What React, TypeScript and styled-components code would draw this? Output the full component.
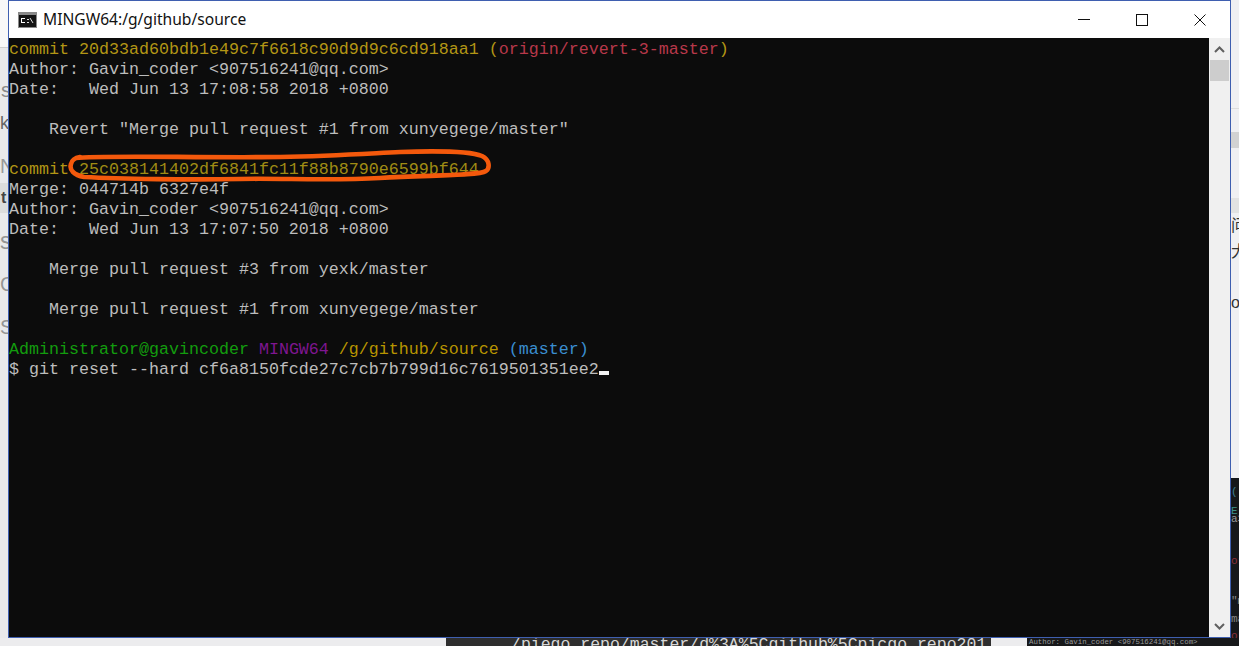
import React from "react";
import styled, { createGlobalStyle } from "styled-components";

const Global = createGlobalStyle`
  html, body { margin: 0; padding: 0; width: 1239px; height: 646px; overflow: hidden; background: #eeeeef; }
  #root { width: 1239px; height: 646px; }
`;

const Desktop = styled.div`
  width: 1239px;
  height: 646px;
  overflow: hidden;
  display: grid;
  grid-template-columns: 8px 1223px 8px;
  grid-template-rows: 638px 8px;
  background: #ececee;
`;

const Strip = styled.div<{ $bg: string }>`
  display: flex;
  flex-direction: column;
  min-height: 0;
  overflow: hidden;
  background: ${(p) => p.$bg};
`;

const StripHead = styled.div<{ $h: number }>`
  flex: none;
  height: ${(p) => p.$h}px;
  background: #f8f8f8;
  border-bottom: 1px solid #cfcfcf;
`;

const Scrap = styled.div<{ $h: number; $gap: number; $bg?: string; $color?: string; $size?: number; $weight?: number; $indent?: number; $cjk?: boolean }>`
  flex: none;
  height: ${(p) => p.$h}px;
  margin-top: ${(p) => p.$gap}px;
  padding-left: ${(p) => p.$indent ?? 0}px;
  overflow: hidden;
  background: ${(p) => p.$bg ?? "transparent"};
  color: ${(p) => p.$color ?? "#8a8a8a"};
  font: ${(p) => p.$weight ?? 400} ${(p) => p.$size ?? 20}px/${(p) => p.$h}px ${(p) => (p.$cjk ? '"Noto Sans CJK SC"' : '"Liberation Sans"')}, sans-serif;
  white-space: nowrap;
`;

const RightTerm = styled.div`
  margin-top: auto;
  height: 160px;
  flex: none;
  background: #15171a;
  display: flex;
  flex-direction: column;
  font: 11px/8px "Liberation Mono", monospace;
  overflow: hidden;
`;

const TermBit = styled.div<{ $gap: number; $c: string }>`
  flex: none;
  height: 8px;
  margin-top: ${(p) => p.$gap}px;
  color: ${(p) => p.$c};
`;

const BottomStrip = styled.div`
  grid-column: 1 / 4;
  display: flex;
  overflow: hidden;
  background: #ececee;
`;

const BottomCode = styled.div`
  margin-left: 446px;
  width: 545px;
  flex: none;
  box-sizing: border-box;
  background: #2e2e2e;
  color: #d8d8d8;
  padding-left: 65px;
  font: 16.5px/13px "Liberation Mono", monospace;
  text-decoration: underline;
  white-space: nowrap;
  overflow: hidden;
`;

const TinyTerm = styled.div`
  margin-left: 36px;
  flex: 1;
  background: #17181a;
  color: #9a9a9a;
  overflow: hidden;
  padding-left: 2px;
  font: 7.4px/8px "Liberation Mono", monospace;
  white-space: nowrap;
`;

const Window = styled.div`
  box-sizing: border-box;
  min-height: 0;
  display: flex;
  flex-direction: column;
  background: #fff;
  border: 1px solid #3f5fb0;
`;

const TitleBar = styled.div`
  height: 37px;
  flex: none;
  display: flex;
  align-items: center;
  background: #fff;
  padding-left: 9px;
  padding-right: 1px;
`;

const AppIcon = styled.svg`
  width: 19px;
  height: 16px;
  flex: none;
`;

const Title = styled.span`
  margin-left: 6px;
  margin-bottom: 2px;
  font: 15.6px "Noto Sans", "Liberation Sans", sans-serif;
  color: #111;
`;

const Controls = styled.div`
  margin-left: auto;
  display: flex;
  height: 100%;
`;

const Control = styled.div`
  width: 58px;
  height: 100%;
  display: flex;
  align-items: center;
  justify-content: center;
  & svg { width: 14px; height: 14px; display: block; }
`;

const Body = styled.div`
  flex: 1;
  min-height: 0;
  display: flex;
`;

const Terminal = styled.div`
  position: relative;
  flex: 1;
  background: #0c0c0c;
  padding-top: 2px;
  overflow: hidden;
  color: #bdbdbd;
  font: 16.67px/20px "Liberation Mono", monospace;
`;

const Line = styled.div`
  height: 20px;
  white-space: pre;
`;

const Seg = styled.span<{ $c: string }>`
  color: ${(p) => p.$c};
`;

const Caret = styled.span`
  display: inline-block;
  width: 10px;
  height: 4px;
  background: #f2f2f2;
  vertical-align: -1px;
`;

const Scrollbar = styled.div`
  width: 21px;
  flex: none;
  display: flex;
  flex-direction: column;
  background: #f0f0f0;
`;

const Arrow = styled.div`
  height: 22px;
  flex: none;
  display: flex;
  align-items: center;
  justify-content: center;
  & svg { width: 11px; height: 7px; display: block; }
`;

const Thumb = styled.div`
  height: 21px;
  flex: none;
  margin: 0 1px;
  background: #cdcdcd;
`;

const Track = styled.div`
  flex: 1;
`;

const Mark = styled.svg`
  position: absolute;
  left: 0;
  top: 0;
  width: 1200px;
  height: 599px;
  pointer-events: none;
`;

const Y = "#b39615";
const H = "#a08c14";

export default function App() {
  return (
    <Desktop>
      <Global />
      <Strip $bg="#e9e9eb">
        <StripHead $h={47} />
        <Scrap $h={20} $gap={32} $indent={1}>s</Scrap>
        <Scrap $h={20} $gap={13} $color="#666" $size={18}>k</Scrap>
        <Scrap $h={20} $gap={23} $color="#9a9a9a">N</Scrap>
        <Scrap $h={30} $gap={7} $bg="#dcdcdc" $size={16} $weight={700} $color="#444" $indent={1}>t</Scrap>
        <Scrap $h={24} $gap={16} $size={23} $color="#959595">s</Scrap>
        <Scrap $h={24} $gap={19} $color="#959595">C</Scrap>
        <Scrap $h={22} $gap={20} $color="#959595">S</Scrap>
      </Strip>

      <Window>
        <TitleBar>
          <AppIcon viewBox="0 0 19 16">
            <rect x="0" y="0" width="19" height="16" fill="#8a8a8a" />
            <rect x="1" y="3" width="17" height="12" fill="#141414" />
            <rect x="3" y="6" width="4" height="1" fill="#fff" />
            <rect x="3" y="6" width="1" height="5" fill="#fff" />
            <rect x="3" y="10" width="4" height="1" fill="#fff" />
            <rect x="9" y="7" width="2" height="1" fill="#ddd" />
            <rect x="9" y="10" width="2" height="1" fill="#ddd" />
            <path d="M12 6l3 5" stroke="#ddd" strokeWidth="1" />
          </AppIcon>
          <Title>MINGW64:/g/github/source</Title>
          <Controls>
            <Control>
              <svg viewBox="0 0 14 14"><path d="M1 6.5h12" stroke="#111" strokeWidth="1" fill="none" /></svg>
            </Control>
            <Control>
              <svg viewBox="0 0 14 14"><rect x="1.5" y="1.5" width="11" height="11" stroke="#111" strokeWidth="1" fill="none" /></svg>
            </Control>
            <Control>
              <svg viewBox="0 0 14 14"><path d="M1.5 1.5l11 11M12.5 1.5l-11 11" stroke="#111" strokeWidth="1" fill="none" /></svg>
            </Control>
          </Controls>
        </TitleBar>
        <Body>
          <Terminal>
            <Line><Seg $c={Y}>commit 20d33ad60bdb1e49c7f6618c90d9d9c6cd918aa1 (</Seg><Seg $c="#b8384a">origin/revert-3-master</Seg><Seg $c={Y}>)</Seg></Line>
            <Line>Author: Gavin_coder &lt;907516241@qq.com&gt;</Line>
            <Line>Date:   Wed Jun 13 17:08:58 2018 +0800</Line>
            <Line> </Line>
            <Line>    Revert "Merge pull request #1 from xunyegege/master"</Line>
            <Line> </Line>
            <Line><Seg $c={Y}>commit </Seg><Seg $c={H}>25c038141402df6841fc11f88b8790e6599bf644</Seg></Line>
            <Line>Merge: 044714b 6327e4f</Line>
            <Line>Author: Gavin_coder &lt;907516241@qq.com&gt;</Line>
            <Line>Date:   Wed Jun 13 17:07:50 2018 +0800</Line>
            <Line> </Line>
            <Line>    Merge pull request #3 from yexk/master</Line>
            <Line> </Line>
            <Line>    Merge pull request #1 from xunyegege/master</Line>
            <Line> </Line>
            <Line><Seg $c="#139c0e">Administrator@gavincoder</Seg> <Seg $c="#7f1690">MINGW64</Seg> <Seg $c="#b89500">/g/github/source</Seg> <Seg $c="#3a8ed0">(master)</Seg></Line>
            <Line>$ git reset --hard cf6a8150fcde27c7cb7b799d16c7619501351ee2<Caret /></Line>
            <Mark viewBox="9 38 1200 599">
              <path
                d="M76 158 C100 155 200 158 280 157 C330 156 360 154 400 152 C430 151 470 151 482 156 C490 160 490 168 486 171 C478 176 430 175 380 178 C330 181 280 178 240 179 C190 180 120 179 84 177 C74 175 69 170 71 164 C72 160 74 158 80 157"
                fill="none"
                stroke="#f4590c"
                strokeWidth="4.6"
                strokeLinecap="round"
              />
            </Mark>
          </Terminal>
          <Scrollbar>
            <Arrow>
              <svg viewBox="0 0 11 7"><path d="M1 6l4.5-4.5L10 6" stroke="#606060" strokeWidth="2" fill="none" /></svg>
            </Arrow>
            <Thumb />
            <Track />
            <Arrow>
              <svg viewBox="0 0 11 7"><path d="M1 1l4.5 4.5L10 1" stroke="#606060" strokeWidth="2" fill="none" /></svg>
            </Arrow>
          </Scrollbar>
        </Body>
      </Window>

      <Strip $bg="#f0f0f2">
        <Scrap $h={1} $gap={108} $bg="#dddddd" />
        <Scrap $h={16} $gap={23} $bg="#d2d2d2" />
        <Scrap $h={15} $gap={50} $bg="#e2e2e2" />
        <Scrap $h={22} $gap={0} $size={16} $color="#333" $cjk>问</Scrap>
        <Scrap $h={22} $gap={4} $size={16} $color="#333" $cjk>大</Scrap>
        <Scrap $h={20} $gap={32} $size={16} $color="#333">o</Scrap>
        <RightTerm>
          <TermBit $gap={10} $c="#3d7f96">(</TermBit>
          <TermBit $gap={11} $c="#3e8f88">E</TermBit>
          <TermBit $gap={0} $c="#999">a&gt;</TermBit>
          <TermBit $gap={34} $c="#8a2f3a">or</TermBit>
          <TermBit $gap={32} $c="#888">"m</TermBit>
          <TermBit $gap={10} $c="#888">ma</TermBit>
          <TermBit $gap={9} $c="#8a2f3a">or</TermBit>
        </RightTerm>
      </Strip>

      <BottomStrip>
        <BottomCode>/piego_repo/master/d%3A%5Cgithub%5Cpicgo_repo201</BottomCode>
        <TinyTerm>Author: Gavin_coder &lt;907516241@qq.com&gt;</TinyTerm>
      </BottomStrip>
    </Desktop>
  );
}
